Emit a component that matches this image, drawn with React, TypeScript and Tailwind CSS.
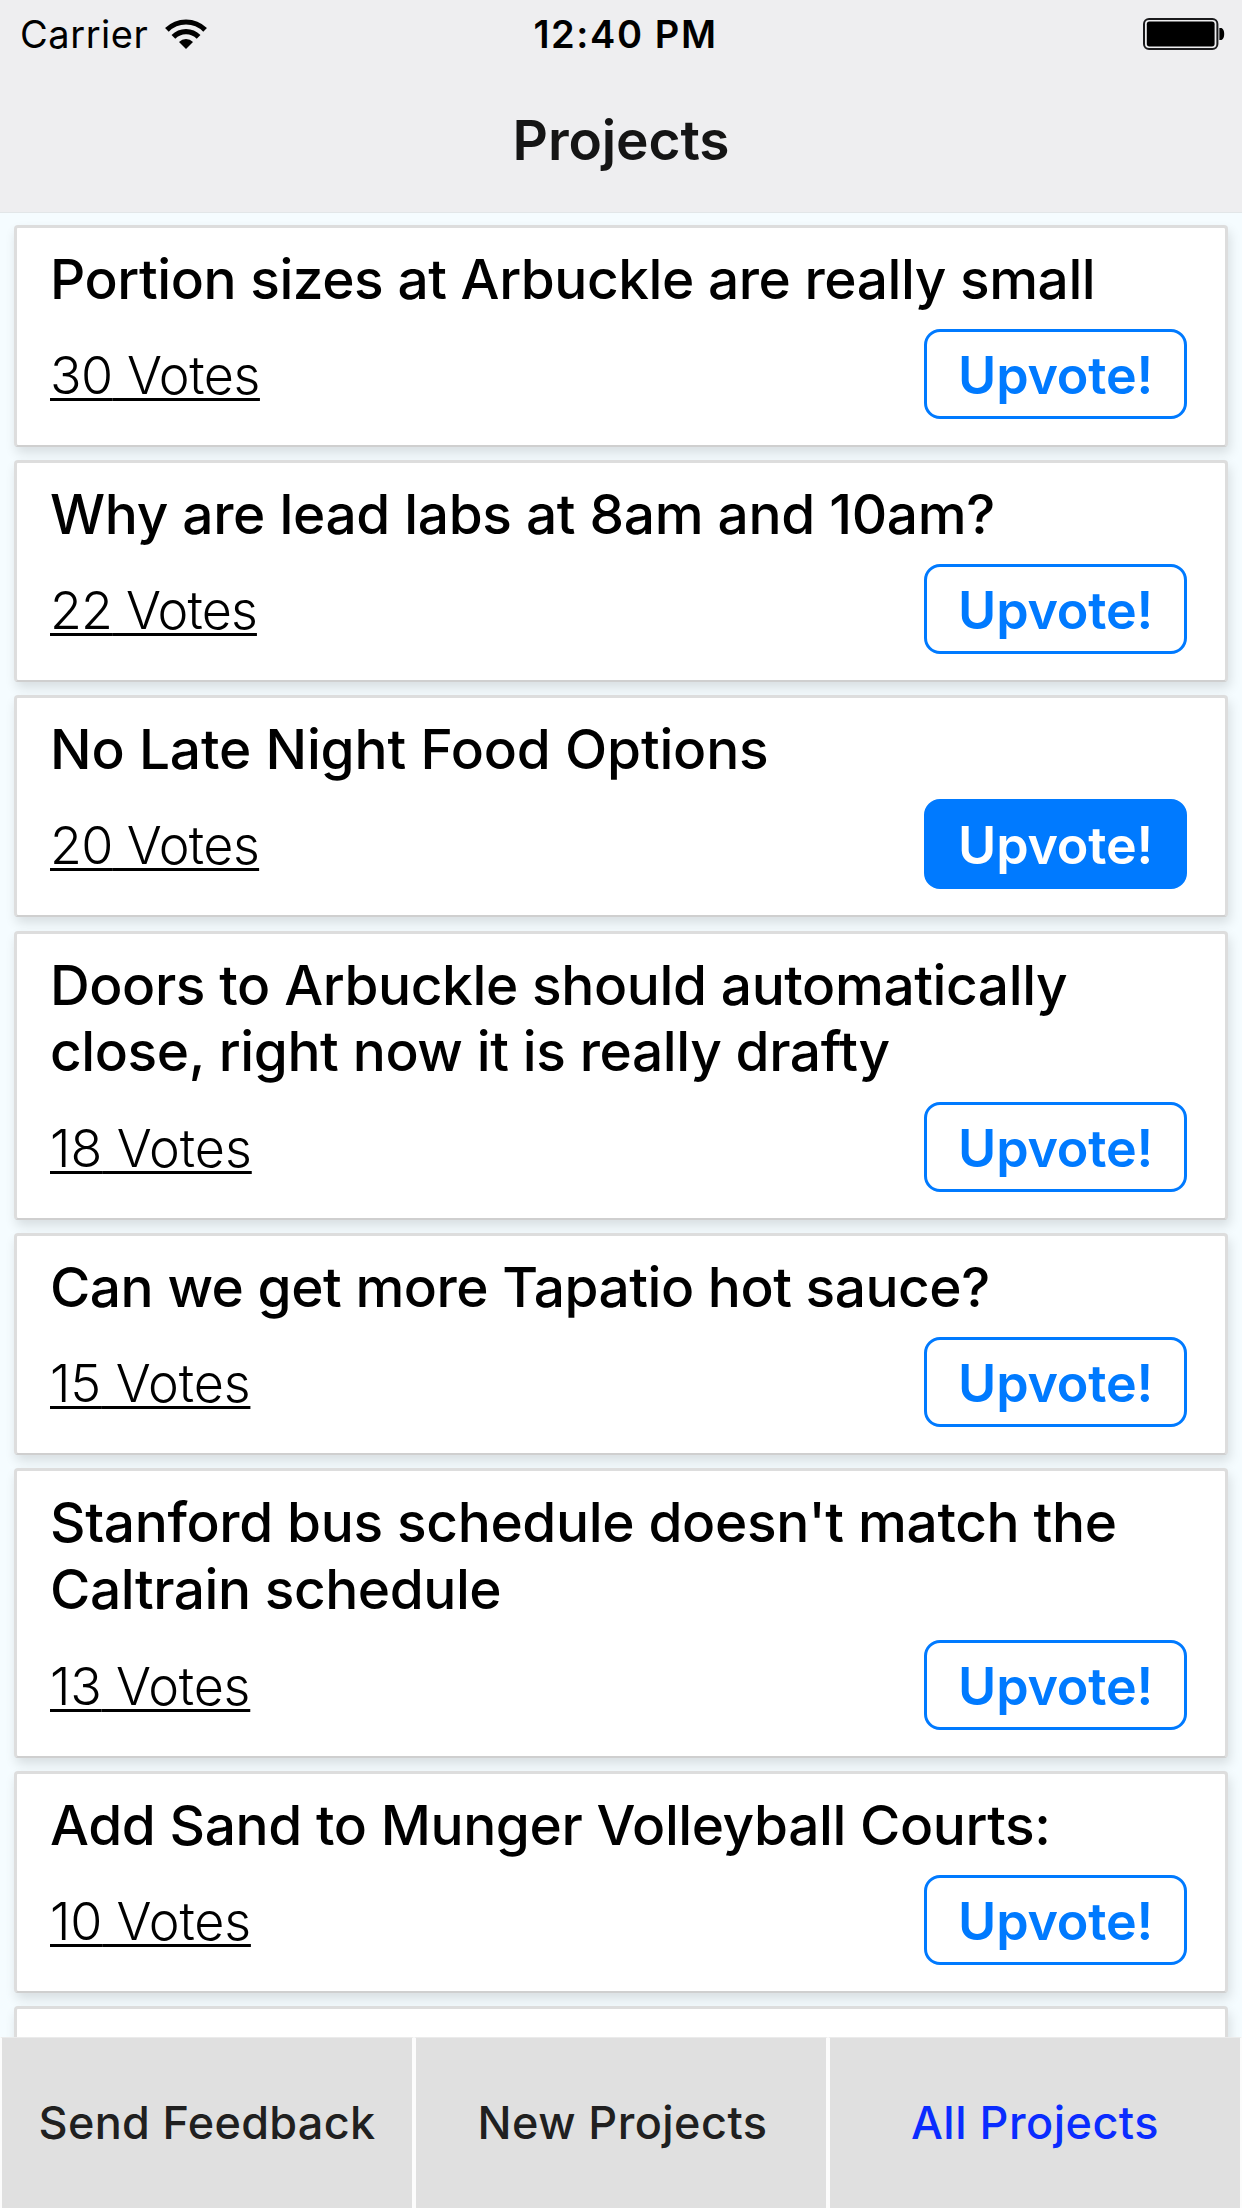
type Project = {
  lines: { text: string; tracking: string }[];
  votes: number;
  votesTracking: string;
  upvoted?: boolean;
};

const projects: Project[] = [
  {
    lines: [{ text: 'Portion sizes at Arbuckle are really small', tracking: 'tracking-[-0.46px]' }],
    votes: 30,
    votesTracking: 'tracking-[-0.45px]',
  },
  {
    lines: [{ text: 'Why are lead labs at 8am and 10am?', tracking: 'tracking-[-0.34px]' }],
    votes: 22,
    votesTracking: 'tracking-[-0.85px]',
  },
  {
    lines: [{ text: 'No Late Night Food Options', tracking: 'tracking-[-0.18px]' }],
    votes: 20,
    votesTracking: 'tracking-[-0.6px]',
    upvoted: true,
  },
  {
    lines: [
      { text: 'Doors to Arbuckle should automatically', tracking: 'tracking-[-0.4px]' },
      { text: 'close, right now it is really drafty', tracking: 'tracking-[-0.4px]' },
    ],
    votes: 18,
    votesTracking: 'tracking-[-0.05px]',
  },
  {
    lines: [{ text: 'Can we get more Tapatio hot sauce?', tracking: 'tracking-[-0.48px]' }],
    votes: 15,
    votesTracking: 'tracking-[-0.1px]',
  },
  {
    lines: [
      { text: "Stanford bus schedule doesn't match the", tracking: 'tracking-[-0.36px]' },
      { text: 'Caltrain schedule', tracking: 'tracking-[-0.45px]' },
    ],
    votes: 13,
    votesTracking: 'tracking-[-0.2px]',
  },
  {
    lines: [{ text: 'Add Sand to Munger Volleyball Courts:', tracking: 'tracking-[-0.42px]' }],
    votes: 10,
    votesTracking: 'tracking-[-0.2px]',
  },
];

function WifiIcon() {
  return (
    <svg width="42" height="32" viewBox="0 0 42 32" fill="none">
      <path d="M1.9 11.9A27 27 0 0 1 40.1 11.9" stroke="#000" strokeWidth="5.2" />
      <path d="M8.4 18.9A17.5 17.5 0 0 1 33.6 18.9" stroke="#000" strokeWidth="5.2" />
      <path d="M21 31L14 23.9A10.2 10.2 0 0 1 28 23.9Z" fill="#000" />
    </svg>
  );
}

function BatteryIcon() {
  return (
    <svg width="82" height="34" viewBox="0 0 82 34" fill="none">
      <rect x="1" y="2" width="73.4" height="30" rx="5" stroke="#1a1a1c" strokeWidth="2" />
      <rect x="3.8" y="4.6" width="67.8" height="24.8" rx="2.6" fill="#000" />
      <path d="M76.4 11h1.4c2 0 3.4 2.4 3.4 6s-1.4 6-3.4 6h-1.4z" fill="#000" />
    </svg>
  );
}

function Header() {
  return (
    <header className="h-[213px] shrink-0 border-b border-[#e2e6e8] bg-[#eeeef0]">
      <div className="grid h-[68px] grid-cols-[1fr_auto_1fr] items-center pl-5 pr-[17px] text-[38px] leading-none text-black">
        <div className="flex items-center">
          <span className="tracking-[0.55px]">Carrier</span>
          <span className="ml-[17px]">
            <WifiIcon />
          </span>
        </div>
        <span className="pl-[6px] font-semibold tracking-[1.6px]">12:40 PM</span>
        <div className="flex justify-end">
          <BatteryIcon />
        </div>
      </div>
      <h1 className="mt-[39px] text-center text-[55px] font-semibold leading-[66px] tracking-[-0.1px] text-[#151515]">
        Projects
      </h1>
    </header>
  );
}

function ProjectCard({ project }: { project: Project }) {
  return (
    <article className="rounded-[4px] border-[3px] border-b-2 border-[#dddddd] border-b-[#cfcfcf] bg-white pb-[26px] pl-[33px] pr-[38px] pt-[18px] shadow-[2px_6px_12px_rgba(0,0,0,0.12)]">
      <h2
        className={`whitespace-nowrap text-[55px] font-medium leading-[66.5px] text-black ${
          project.lines.length > 1 ? 'pb-px' : ''
        }`}
      >
        {project.lines.map((line) => (
          <span key={line.text} className={`block ${line.tracking}`}>
            {line.text}
          </span>
        ))}
      </h2>
      <div className="mt-[16.5px] flex h-[90px] items-center justify-between text-[52px] leading-none">
        <a
          className={`pt-1 font-light text-black underline decoration-[3px] underline-offset-[4px] [text-decoration-skip-ink:none] ${project.votesTracking}`}
        >
          {project.votes} Votes
        </a>
        <button
          className={`flex h-[90px] w-[263px] items-center justify-center rounded-[16px] border-[3px] border-[#007aff] pt-1 font-semibold tracking-[-0.2px] ${
            project.upvoted ? 'bg-[#007aff] text-white' : 'bg-white text-[#007aff]'
          }`}
        >
          Upvote!
        </button>
      </div>
    </article>
  );
}

const tabs = [
  { label: 'Send Feedback', style: 'text-[#202020] tracking-[0.3px]' },
  { label: 'New Projects', style: 'text-[#202020] tracking-[0.45px] pl-[3px]' },
  { label: 'All Projects', style: 'text-[#0a2cff] tracking-[0.5px]' },
];

export default function App() {
  return (
    <div className="flex h-[2208px] w-[1242px] flex-col overflow-hidden bg-[#f5fcff] font-['Inter',sans-serif]">
      <Header />
      <main className="flex min-h-0 flex-1 flex-col gap-[13.2px] overflow-hidden px-[14px] pt-3">
        {projects.map((p) => (
          <ProjectCard key={p.votes} project={p} />
        ))}
        <div className="h-[222px] shrink-0 rounded-[4px] border-[3px] border-[#dddddd] bg-white shadow-[2px_6px_12px_rgba(0,0,0,0.12)]" />
      </main>
      <nav className="grid h-[171px] shrink-0 grid-cols-3">
        {tabs.map((tab) => (
          <button
            key={tab.label}
            className={`border-x-2 border-t border-x-[#fcfcfc] border-t-[#ebebeb] bg-[#e0e0e0] text-[45px] font-medium ${tab.style}`}
          >
            {tab.label}
          </button>
        ))}
      </nav>
    </div>
  );
}
